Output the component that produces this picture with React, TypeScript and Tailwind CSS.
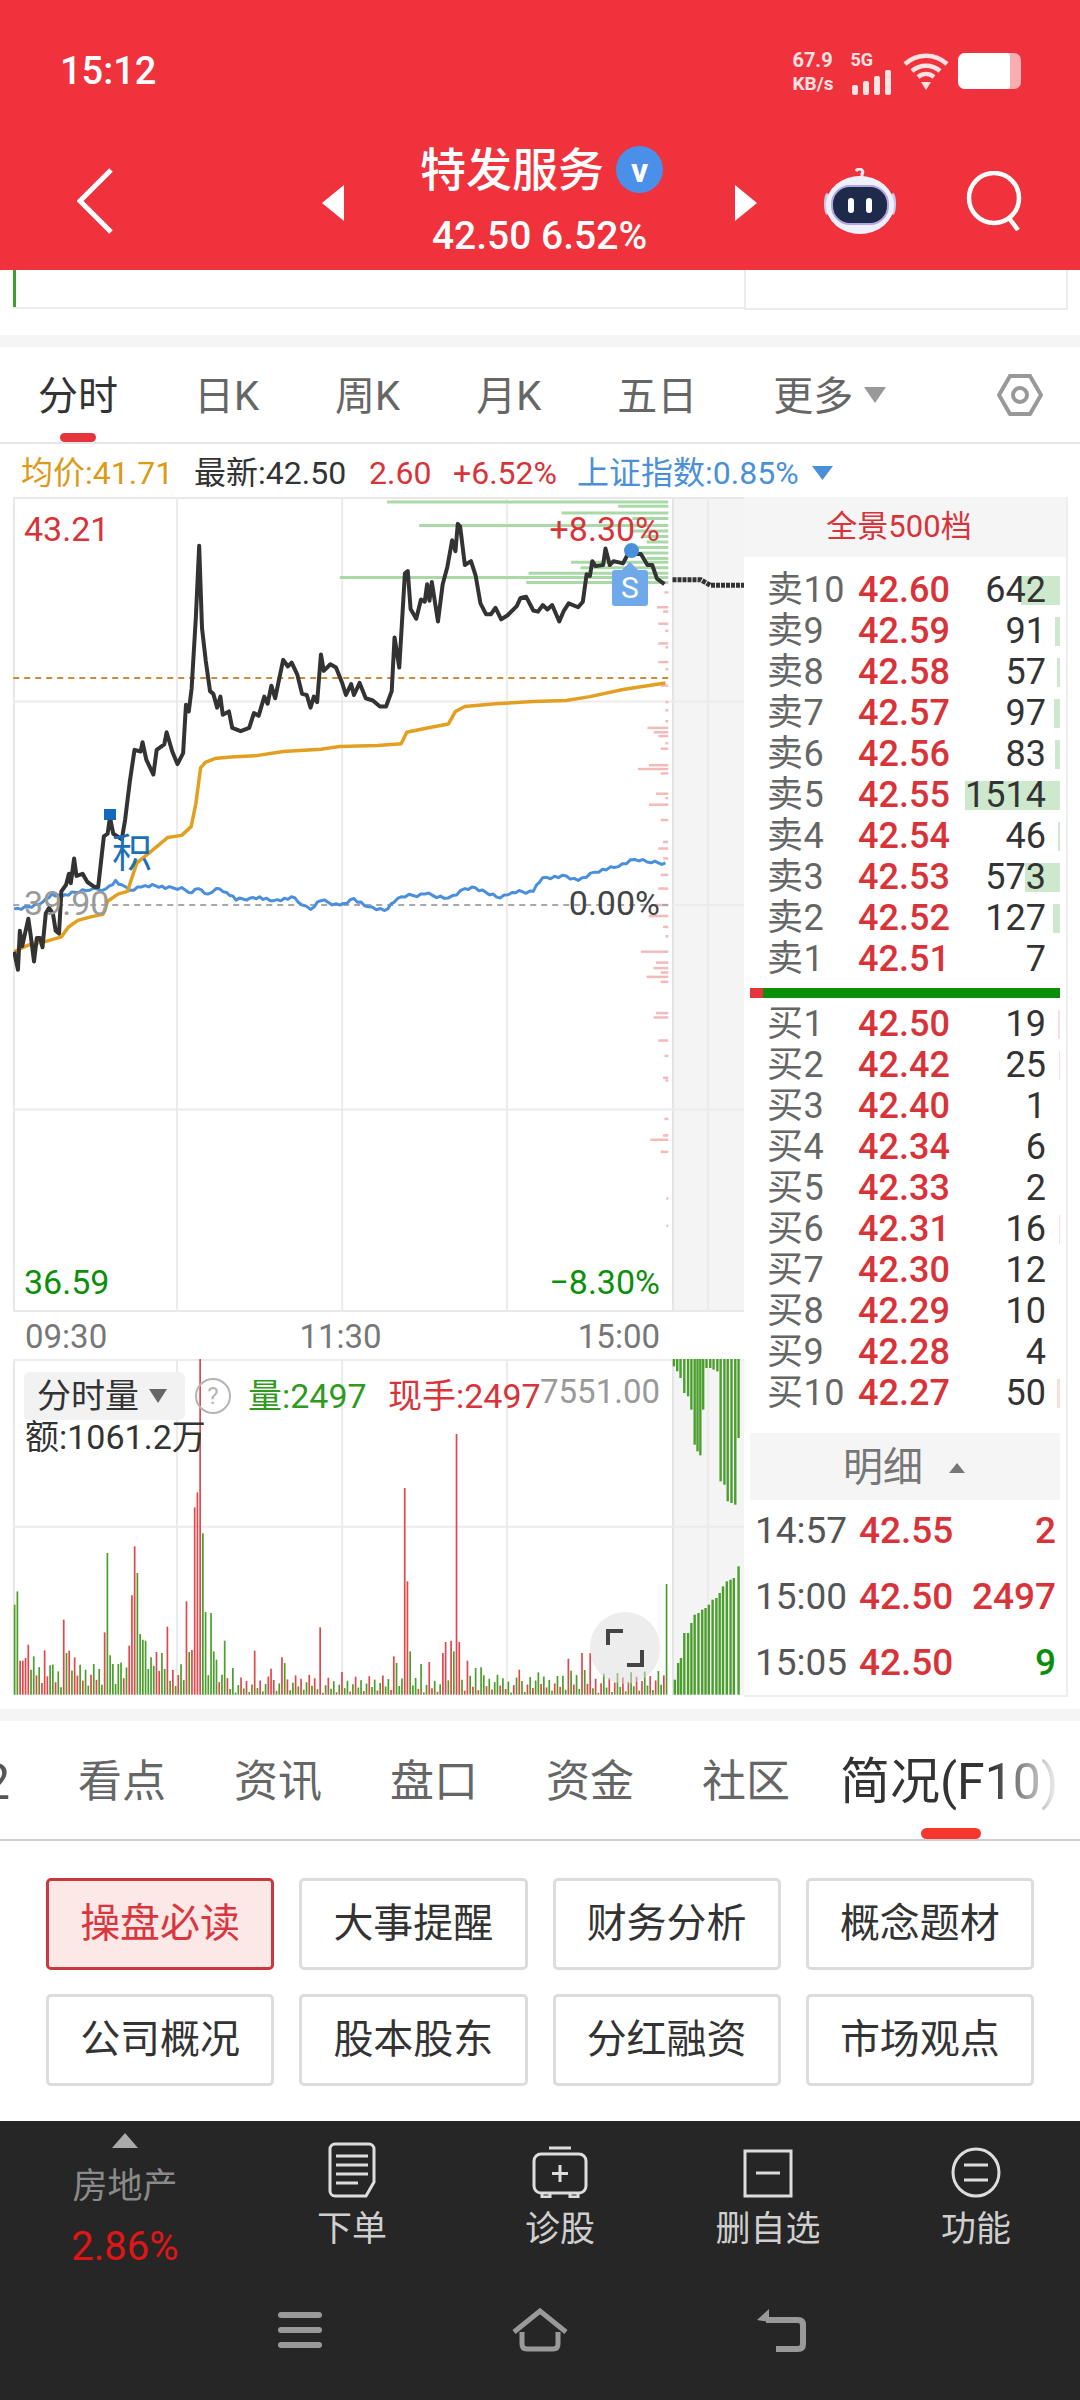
import React from "react"

const fontStack = "font-['Roboto','Noto_Sans_CJK_SC',sans-serif]"

const priceLine = "30,860 38,893 42,822 47,850 60,800 65,830 72,878 78,835 85,835 90,852 97,790 104,780 112,790 118,822 125,827 130,750 140,738 146,718 150,735 157,690 162,722 175,718 185,733 200,742 208,742 220,650 228,645 233,615 240,645 258,655 265,620 275,550 285,492 298,495 302,478 310,510 325,537 332,492 348,482 353,460 365,495 376,518 388,498 394,410 400,422 406,380 415,250 422,120 428,270 436,330 445,385 452,390 460,415 467,395 472,428 485,422 492,452 510,458 528,452 538,425 548,430 560,395 567,408 575,375 583,398 600,328 610,340 618,333 630,355 640,390 650,392 658,415 665,395 672,405 680,318 686,348 700,336 712,342 725,370 733,392 744,372 750,392 762,370 775,398 790,402 805,413 818,413 830,385 836,287 846,342 858,170 864,166 870,235 882,253 892,218 900,222 905,190 910,220 915,186 928,258 938,190 948,158 958,110 965,130 970,80 975,85 985,155 998,148 1008,175 1018,225 1030,245 1040,245 1050,233 1062,254 1075,247 1095,230 1103,215 1115,213 1130,238 1140,240 1150,228 1160,236 1170,228 1185,258 1195,238 1205,225 1225,232 1235,222 1243,172 1250,175 1255,148 1262,157 1278,155 1283,125 1292,155 1300,148 1320,152 1335,128 1345,135 1358,135 1372,155 1382,155 1392,180 1408,190"
const avgLine = "30,860 55,850 70,845 90,843 110,838 130,833 145,815 165,803 190,797 218,792 228,768 250,755 270,750 290,698 320,677 355,652 385,648 405,632 415,590 425,525 435,515 455,508 490,505 540,503 600,495 680,491 720,486 800,484 850,481 862,460 900,453 950,445 965,422 985,413 1050,408 1130,404 1200,402 1250,395 1320,382 1410,370"
const indexAnchors = [[30, 782], [60, 778], [90, 770], [110, 755], [130, 760], [160, 752], [190, 748], [225, 745], [245, 730], [258, 738], [275, 748], [300, 742], [330, 740], [350, 745], [385, 743], [400, 752], [420, 745], [440, 755], [458, 745], [480, 752], [500, 766], [530, 762], [550, 760], [580, 767], [625, 762], [640, 775], [658, 783], [680, 767], [720, 775], [750, 763], [780, 778], [815, 785], [835, 770], [850, 760], [900, 755], [950, 762], [985, 745], [1000, 742], [1030, 752], [1060, 762], [1085, 752], [1130, 750], [1150, 725], [1200, 722], [1225, 730], [1260, 715], [1310, 705], [1345, 692], [1380, 698], [1410, 698]]

// the index ticks every minute, so the anchors get a small fixed ripple between them
const indexLine = indexAnchors
  .flatMap(([x, y], i) => {
    const next = indexAnchors[i + 1]
    if (!next) return [`${x},${y}`]
    const steps = Math.max(1, Math.round((next[0] - x) / 8))
    return Array.from({ length: steps }, (_, s) => {
      const t = s / steps
      const ripple = s === 0 ? 0 : ((i * 31 + s * 17) % 7) - 3
      return `${x + (next[0] - x) * t},${y + (next[1] - y) * t + ripple}`
    })
  })
  .join(" ")

// depth ladder on the right edge of the price chart: [y, left]
const askDepth = [[40, 820], [48, 1310], [60, 1190], [70, 1340], [83, 888], [93, 1340], [103, 1360], [113, 1370], [123, 1350], [133, 1340], [143, 1370], [150, 1210], [160, 1230], [170, 1120], [178, 720], [187, 1115]]
const bidDepth = [[205, 1408], [232, 1392], [240, 1405], [262, 1395], [275, 1410], [298, 1395], [305, 1410], [332, 1395], [345, 1410], [375, 1400], [405, 1410], [420, 1410], [440, 1410], [452, 1372], [460, 1385], [467, 1395], [480, 1410], [490, 1400], [520, 1375], [527, 1352], [535, 1400], [572, 1390], [580, 1410], [592, 1375], [620, 1400], [660, 1405], [672, 1395], [690, 1405], [720, 1400], [745, 1395], [775, 1390], [795, 1375], [815, 1405], [832, 1410], [860, 1358], [880, 1390], [890, 1385], [898, 1400], [906, 1370], [915, 1400], [972, 1390], [980, 1385], [1022, 1395], [1050, 1408], [1090, 1405], [1095, 1410], [1165, 1408], [1195, 1405], [1203, 1378], [1225, 1400], [1310, 1412], [1360, 1412]]

const volumeSpikes: [number, number, string][] = [[32, 800, "g"], [38, 760, "g"], [42, 968, "r"], [48, 968, "r"], [55, 960, "r"], [60, 920, "r"], [66, 995, "g"], [72, 955, "g"], [78, 1012, "r"], [95, 937, "r"], [101, 1015, "r"], [107, 982, "g"], [112, 980, "g"], [135, 845, "r"], [141, 945, "g"], [147, 938, "r"], [158, 958, "r"], [220, 883, "r"], [227, 645, "g"], [233, 952, "g"], [239, 978, "g"], [250, 978, "g"], [273, 923, "r"], [279, 772, "r"], [285, 625, "r"], [290, 705, "g"], [296, 888, "g"], [302, 905, "g"], [308, 908, "g"], [313, 993, "g"], [319, 958, "g"], [331, 942, "r"], [342, 945, "g"], [348, 993, "g"], [353, 866, "r"], [394, 790, "r"], [400, 942, "g"], [405, 936, "r"], [411, 508, "r"], [417, 463, "r"], [422, 62, "r"], [428, 586, "g"], [434, 822, "g"], [445, 825, "g"], [451, 940, "g"], [457, 965, "g"], [475, 908, "g"], [491, 990, "g"], [537, 938, "r"], [577, 992, "r"], [595, 958, "r"], [606, 975, "g"], [681, 868, "r"], [727, 1002, "r"], [836, 955, "r"], [842, 975, "g"], [858, 450, "r"], [864, 730, "r"], [870, 940, "g"], [893, 978, "g"], [910, 972, "r"], [940, 945, "r"], [945, 912, "r"], [956, 908, "r"], [962, 940, "g"], [968, 288, "r"], [974, 912, "r"], [991, 968, "r"], [1008, 990, "g"], [1019, 988, "g"], [1100, 995, "r"], [1140, 1003, "g"], [1204, 962, "r"], [1232, 945, "r"], [1250, 945, "r"], [1410, 738, "g"]]

// one bar per minute; a small fixed sequence fills the quiet minutes between spikes
const volumeBars = Array.from({ length: 240 }, (_, i) => {
  const x = 31 + i * 5.78
  const noise = ((i * 7919 + 13) % 101) / 101
  const height = i < 70 ? 20 + noise * 80 : 6 + noise * (i > 200 ? 70 : 55)
  const spike = volumeSpikes.find(([sx]) => Math.abs(sx - x) <= 2.9)
  return {
    x,
    top: spike ? spike[1] : 1070 - height,
    color: (spike ? spike[2] : (i * 37) % 5 < 2 ? "r" : "g") === "r" ? "#e2474b" : "#4a9f2c",
  }
})

const closeHanging = [[1428, 85], [1435, 100], [1442, 120], [1450, 165], [1458, 175], [1465, 215], [1472, 320], [1478, 340], [1484, 352], [1490, 215], [1497, 90], [1505, 90], [1512, 95], [1520, 100], [1527, 430], [1535, 440], [1542, 490], [1550, 495], [1558, 500], [1565, 300]]
const closeRising = [[1430, 1025], [1437, 975], [1443, 960], [1450, 885], [1458, 885], [1465, 855], [1472, 830], [1480, 825], [1488, 815], [1495, 810], [1502, 800], [1510, 785], [1518, 780], [1525, 765], [1532, 745], [1540, 730], [1548, 725], [1555, 720], [1565, 685]]

const asks = [
  ["卖10", "42.60", "642", 39],
  ["卖9", "42.59", "91", 5],
  ["卖8", "42.58", "57", 3],
  ["卖7", "42.57", "97", 6],
  ["卖6", "42.56", "83", 5],
  ["卖5", "42.55", "1514", 95],
  ["卖4", "42.54", "46", 2],
  ["卖3", "42.53", "573", 35],
  ["卖2", "42.52", "127", 7],
  ["卖1", "42.51", "7", 0],
] as const

const bids = [
  ["买1", "42.50", "19", 2],
  ["买2", "42.42", "25", 1],
  ["买3", "42.40", "1", 0],
  ["买4", "42.34", "6", 0],
  ["买5", "42.33", "2", 0],
  ["买6", "42.31", "16", 1],
  ["买7", "42.30", "12", 0],
  ["买8", "42.29", "10", 0],
  ["买9", "42.28", "4", 0],
  ["买10", "42.27", "50", 3],
] as const

const ticks = [
  ["14:57", "42.55", "2", "text-[#d9333a]"],
  ["15:00", "42.50", "2497", "text-[#d9333a]"],
  ["15:05", "42.50", "9", "text-[#0b8f0b]"],
]

const buttons = ["操盘必读", "大事提醒", "财务分析", "概念题材", "公司概况", "股本股东", "分红融资", "市场观点"]

function StatusBar() {
  return (
    <div className="flex h-[145px] items-start pl-[60px]">
      <span className="mt-[51px] text-[38px] leading-[40px] font-medium text-white">15:12</span>
      <div className="ml-[636px] mt-[49px] flex w-[44px] flex-col text-[20px] leading-[23px] font-bold text-[#ffe3e3]">
        <span>67.9</span>
        <span className="text-[19px]">KB/s</span>
      </div>
      <div className="ml-[14px] mt-[50px] flex w-[44px] flex-col">
        <span className="text-[18px] leading-[20px] font-bold text-[#ffe3e3]">5G</span>
        <svg width="44" height="25" viewBox="0 0 44 25" fill="#ffe3e3">
          <rect x="2" y="15" width="6" height="10" rx="2" />
          <rect x="13" y="11" width="6" height="14" rx="2" />
          <rect x="24" y="6" width="6" height="19" rx="2" />
          <rect x="35" y="0" width="6" height="25" rx="2" />
        </svg>
      </div>
      <svg className="ml-[9px] mt-[53px]" width="46" height="38" viewBox="0 0 46 38" fill="none" stroke="#ffe3e3" strokeWidth="4.5">
        <path d="M2 11C14 0 32 0 44 11" />
        <path d="M9 18C17 11 29 11 37 18" />
        <path d="M15 24C20 20 26 20 31 24" />
        <path d="M18 29H28L23 37Z" fill="#ffe3e3" stroke="none" />
      </svg>
      <div className="ml-[9px] mt-[53px] flex h-[36px] w-[63px] overflow-hidden rounded-[7px] bg-[#f8aeb0]">
        <div className="h-full w-[52px] rounded-r-[3px] bg-white" />
      </div>
    </div>
  )
}

function RobotIcon() {
  return (
    <svg width="72" height="66" viewBox="0 0 72 66">
      <path d="M32 3C35 -1 41 2 38 6L38 11" fill="none" stroke="#e9ecf8" strokeWidth="3" />
      <ellipse cx="3" cy="36" rx="3" ry="11" fill="#c7cdf0" />
      <ellipse cx="69" cy="36" rx="3" ry="11" fill="#c7cdf0" />
      <ellipse cx="36" cy="37" rx="34" ry="29" fill="#eef0fb" />
      <rect x="8" y="18" width="56" height="38" rx="18" fill="#1d2a4a" stroke="#b3a6e6" strokeWidth="2" />
      <rect x="24" y="30" width="6" height="15" rx="3" fill="#fff" />
      <rect x="42" y="30" width="6" height="15" rx="3" fill="#fff" />
    </svg>
  )
}

function Header() {
  return (
    <header className="flex h-[270px] flex-col bg-[#f0323c] text-white">
      <StatusBar />
      <div className="flex items-center pl-[77px]">
        <svg width="36" height="66" viewBox="0 0 36 66" fill="none" stroke="#fff" strokeWidth="5">
          <path d="M34 2L3 33L34 64" />
        </svg>
        <svg className="ml-[209px] mt-[4px]" width="22" height="36" viewBox="0 0 22 36" fill="#fff">
          <path d="M22 0V36L0 18Z" />
        </svg>
        <div className="flex w-[391px] flex-col items-center">
          <div className="flex h-[48px] items-center gap-[12px] pl-[4px] pt-[1px]">
            <span className="text-[46px] leading-none font-medium">特发服务</span>
            <span className="flex h-[47px] w-[47px] items-center justify-center rounded-full bg-[#4a90e8] text-[34px] leading-none font-bold">v</span>
          </div>
          <span className="mt-[22px] text-[39px] leading-[42px] font-medium">42.50 6.52%</span>
        </div>
        <svg className="mt-[4px]" width="22" height="36" viewBox="0 0 22 36" fill="#fff">
          <path d="M0 0V36L22 18Z" />
        </svg>
        <div className="ml-[67px]">
          <RobotIcon />
        </div>
        <svg className="ml-[70px]" width="60" height="60" viewBox="0 0 60 60" fill="none" stroke="#fff" strokeWidth="4.5">
          <circle cx="28" cy="27" r="25" />
          <path d="M43 47L52 59" />
        </svg>
      </div>
    </header>
  )
}

function ChartTabs() {
  return (
    <div className="relative flex h-[97px] items-center gap-[76px] border-b-2 border-[#e6e6e6] pl-[38px] pt-[5px] text-[40px] leading-none text-[#666]">
      <span className="text-[#333]">分时</span>
      <span>日K</span>
      <span>周K</span>
      <span>月K</span>
      <span>五日</span>
      <span className="flex items-center gap-[11px]">
        更多
        <svg className="mb-[4px]" width="22" height="16" viewBox="0 0 22 16" fill="#999">
          <path d="M0 0H22L11 16Z" />
        </svg>
      </span>
      <svg className="absolute left-[997px] top-[26px]" width="46" height="44" viewBox="0 0 46 44" fill="none" stroke="#999" strokeWidth="4">
        <path d="M13 3H33L44 22L33 41H13L2 22Z" />
        <circle cx="23" cy="22" r="7" />
      </svg>
      <div className="absolute bottom-0 left-[60px] h-[9px] w-[36px] rounded-full bg-[#e5343c]" />
    </div>
  )
}

function Legend() {
  return (
    <div className="flex h-[53px] items-center pl-[21px] pt-[5px] text-[32px] leading-none font-normal">
      <span className="w-[173px] text-[#dc9a16]">均价:41.71</span>
      <span className="w-[175px] text-[#333]">最新:42.50</span>
      <span className="w-[84px] text-[#d9333a]">2.60</span>
      <span className="w-[124px] text-[#d9333a]">+6.52%</span>
      <span className="text-[#4a90d9]">上证指数:0.85%</span>
      <svg className="ml-[13px]" width="21" height="14" viewBox="0 0 21 14" fill="#4a90d9">
        <path d="M0 0H21L10.5 14Z" />
      </svg>
    </div>
  )
}

function PriceChart() {
  return (
    <div className="relative flex h-[815px] w-[731px] border-t-2 border-b-2 border-[#e8e8e8]">
      <div className="h-full w-[659px] border-l-2 border-[#e8e8e8]" />
      <div className="h-full w-[72px] border-l-2 border-[#e4e4e4] bg-[#f4f4f4]" />
      <svg className="absolute left-0 top-[-2px]" width="731" height="815" viewBox="27.5 31 1549 1486" preserveAspectRatio="none" fill="none">
        <g stroke="#ebebeb" strokeWidth="2">
          {[375, 725, 1074, 1500].map((x) => (
            <line key={x} x1={x} x2={x} y1="31" y2="1517" vectorEffect="non-scaling-stroke" />
          ))}
          {[404, 1148].map((y) => (
            <line key={y} x1="28" x2="1577" y1={y} y2={y} vectorEffect="non-scaling-stroke" />
          ))}
        </g>
        <line x1="1425" x2="1577" y1="775" y2="775" stroke="#ebebeb" strokeWidth="2" vectorEffect="non-scaling-stroke" />
        {askDepth.map(([y, left]) => (
          <line key={y} x1={left} x2="1416" y1={y} y2={y} stroke="#a9d9a7" strokeWidth="3" vectorEffect="non-scaling-stroke" />
        ))}
        {bidDepth.map(([y, left]) => (
          <line key={y} x1={left} x2="1416" y1={y} y2={y} stroke="#f4b9b9" strokeWidth="2.5" vectorEffect="non-scaling-stroke" />
        ))}
        <line x1="28" x2="1425" y1="361" y2="361" stroke="#d08a3c" strokeWidth="2" strokeDasharray="6 5" vectorEffect="non-scaling-stroke" />
        <line x1="28" x2="1416" y1="775" y2="775" stroke="#a8a8a8" strokeWidth="2" strokeDasharray="6 5" vectorEffect="non-scaling-stroke" />
        <polyline points={indexLine} stroke="#4a8fdc" strokeWidth="3" strokeLinejoin="round" vectorEffect="non-scaling-stroke" />
        <polyline points={avgLine} stroke="#e3a020" strokeWidth="3.5" strokeLinejoin="round" vectorEffect="non-scaling-stroke" />
        <polyline points={priceLine} stroke="#333" strokeWidth="4" strokeLinejoin="round" vectorEffect="non-scaling-stroke" />
        <polyline points="1425,182 1485,182 1505,192 1577,192" stroke="#333" strokeWidth="5" strokeDasharray="4 1" vectorEffect="non-scaling-stroke" />
      </svg>
      <span className="absolute left-[11px] top-[14px] text-[34px] leading-[32px] text-[#d9333a]">43.21</span>
      <span className="absolute right-[84px] top-[14px] text-[34px] leading-[32px] text-[#d9333a]">+8.30%</span>
      <span className="absolute left-[11px] top-[388px] text-[34px] leading-[32px] text-[#9a9a9a]">39.90</span>
      <span className="absolute right-[84px] top-[388px] text-[34px] leading-[32px] text-[#444]">0.00%</span>
      <span className="absolute left-[11px] bottom-[12px] text-[34px] leading-[32px] text-[#0b8f0b]">36.59</span>
      <span className="absolute right-[84px] bottom-[12px] text-[34px] leading-[32px] text-[#0b8f0b]">−8.30%</span>
      <div className="absolute left-[91px] top-[310px] h-[11px] w-[12px] bg-[#1569bd]" />
      <span className="absolute left-[99px] top-[335px] text-[40px] leading-[40px] text-[#1b6fb8]">积</span>
      <div className="absolute left-[611px] top-[44px] h-[15px] w-[15px] rounded-full bg-[#4a8fdc]" />
      <div className="absolute left-[610px] top-[66px] h-[14px] w-[14px] rotate-45 bg-[#6fa9ea]" />
      <div className="absolute left-[599px] top-[71px] flex h-[36px] w-[36px] items-center justify-center rounded-[3px] bg-[#6fa9ea] text-[30px] leading-none text-white">S</div>
    </div>
  )
}

function TimeAxis() {
  return (
    <div className="relative flex h-[47px] w-[659px] items-center justify-between pl-[12px] pr-[12px] pt-[3px] text-[33px] leading-none text-[#777]">
      <span>09:30</span>
      <span className="ml-[-4px]">11:30</span>
      <span>15:00</span>
    </div>
  )
}

function VolumeChart() {
  return (
    <div className="relative flex h-[336px] w-[731px] border-t-2 border-[#ececec]">
      <div className="h-full w-[659px] border-l-2 border-[#e8e8e8]" />
      <div className="h-full w-[72px] border-l-2 border-[#e4e4e4] bg-[#f4f4f4]" />
      <svg className="absolute left-0 top-[-2px]" width="731" height="336" viewBox="27.5 63 1549 1008" preserveAspectRatio="none" fill="none">
        {[375, 725, 1074, 1500].map((x) => (
          <line key={x} x1={x} x2={x} y1="63" y2="1070" stroke="#ebebeb" strokeWidth="2" vectorEffect="non-scaling-stroke" />
        ))}
        <line x1="28" x2="1577" y1="566" y2="566" stroke="#ebebeb" strokeWidth="2" vectorEffect="non-scaling-stroke" />
        {volumeBars.map((bar) => (
          <line key={bar.x} x1={bar.x} x2={bar.x} y1={bar.top} y2="1070" stroke={bar.color} strokeWidth="1.7" vectorEffect="non-scaling-stroke" />
        ))}
        {closeHanging.map(([x, y]) => (
          <line key={x} x1={x} x2={x} y1="63" y2={y} stroke="#4a9f2c" strokeWidth="2.4" vectorEffect="non-scaling-stroke" />
        ))}
        {closeRising.map(([x, y]) => (
          <line key={x} x1={x} x2={x} y1={y} y2="1070" stroke="#4a9f2c" strokeWidth="2.4" vectorEffect="non-scaling-stroke" />
        ))}
      </svg>
      <div className="absolute left-[11px] top-[11px] flex h-[48px] w-[161px] items-center gap-[10px] rounded-[6px] bg-[#f2f2f2] pl-[13px] text-[34px] leading-none text-[#333]">
        分时量
        <svg width="18" height="14" viewBox="0 0 18 14" fill="#666">
          <path d="M0 0H18L9 14Z" />
        </svg>
      </div>
      <div className="absolute left-[182px] top-[17px] flex h-[36px] w-[36px] items-center justify-center rounded-full border-2 border-[#b5b5b5] text-[24px] leading-none text-[#b5b5b5]">?</div>
      <span className="absolute left-[235px] top-[17px] text-[34px] leading-[36px] text-[#2f9a1e]">量:2497</span>
      <span className="absolute left-[375px] top-[17px] text-[34px] leading-[36px] text-[#d9333a]">现手:2497</span>
      <span className="absolute left-[527px] top-[13px] text-[33px] leading-[36px] text-[#999]">7551.00</span>
      <span className="absolute left-[12px] top-[58px] text-[34px] leading-[36px] text-[#333]">额:1061.2万</span>
      <div className="absolute left-[577px] top-[251px] flex h-[72px] w-[70px] items-center justify-center rounded-full bg-[#dcdcdc]/50">
        <svg width="38" height="38" viewBox="0 0 38 38" fill="none" stroke="#444" strokeWidth="4">
          <path d="M2 16V2H17" />
          <path d="M36 21V36H21" />
        </svg>
      </div>
    </div>
  )
}

function BookRow({ label, price, qty, bar, barColor }: { label: string; price: string; qty: string; bar: number; barColor: string }) {
  return (
    <div className="relative flex h-[41px] items-center pl-[17px] pr-[14px]">
      {bar > 0 && <div className={`absolute right-0 top-[6px] h-[29px] ${barColor}`} style={{ width: bar }} />}
      <span className="relative w-[91px] text-[36px] leading-none tracking-[0.5px] text-[#666]">{label}</span>
      <span className="relative text-[36px] leading-none font-medium text-[#d9333a]">{price}</span>
      <span className="relative flex-1 text-right text-[36px] leading-none text-[#333]">{qty}</span>
    </div>
  )
}

function OrderBook() {
  return (
    <aside className="flex h-[1200px] w-[324px] flex-col border-r-2 border-b-2 border-[#eee]">
      <div className="flex h-[60px] shrink-0 items-center justify-center bg-[#f5f5f5] pr-[12px] text-[31px] leading-none text-[#d9333a]">全景500档</div>
      <div className="mt-[13px] flex flex-col px-[6px]">
        {asks.map(([label, price, qty, bar]) => (
          <BookRow key={label} label={label} price={price} qty={qty} bar={bar} barColor="bg-[#cde8cd]" />
        ))}
        <div className="mt-[8px] mb-[6px] flex h-[10px]">
          <div className="w-[13px] bg-[#e5343c]" />
          <div className="flex-1 bg-[#0b8f0b]" />
        </div>
        {bids.map(([label, price, qty, bar]) => (
          <BookRow key={label} label={label} price={price} qty={qty} bar={bar} barColor="bg-[#f8dede]" />
        ))}
        <div className="mt-[19px] flex h-[67px] items-center gap-[26px] bg-[#f5f5f5] pl-[93px] pt-[3px] text-[40px] leading-none text-[#777]">
          明细
          <svg width="16" height="10" viewBox="0 0 16 10" fill="#777">
            <path d="M0 10H16L8 0Z" />
          </svg>
        </div>
        <div className="mt-[-2px] flex flex-col">
          {ticks.map(([time, price, qty, color]) => (
            <div key={time} className="flex h-[66px] items-center pl-[5px] pr-[4px] text-[37px] leading-none">
              <span className="w-[104px] text-[#555]">{time}</span>
              <span className="font-medium text-[#d9333a]">{price}</span>
              <span className={`flex-1 text-right font-medium ${color}`}>{qty}</span>
            </div>
          ))}
        </div>
      </div>
    </aside>
  )
}

function InfoTabs() {
  return (
    <div className="relative flex h-[121px] items-center overflow-hidden border-b-2 border-[#cfcfcf] pt-[4px] text-[44px] leading-none text-[#666]">
      <span className="ml-[-18px] w-[96px] text-[50px] text-[#555]">2</span>
      <span className="w-[156px]">看点</span>
      <span className="w-[156px]">资讯</span>
      <span className="w-[156px]">盘口</span>
      <span className="w-[156px]">资金</span>
      <span className="w-[140px]">社区</span>
      <span className="ml-[-2px] text-[50px] whitespace-nowrap text-[#333]">简况(F10)</span>
      <div className="absolute right-[18px] top-0 h-full w-[70px] bg-gradient-to-r from-white/0 to-white" />
      <div className="absolute bottom-0 left-[921px] h-[11px] w-[60px] rounded-full bg-[#f5372f]" />
    </div>
  )
}

function InfoButtons() {
  return (
    <div className="grid grid-cols-4 gap-x-[25px] gap-y-[24px] px-[46px] pt-[37px]">
      {buttons.map((name, i) => (
        <div
          key={name}
          className={`flex h-[92px] items-center justify-center rounded-[5px] border-[3px] text-[40px] leading-none ${
            i === 0 ? "border-[#c8383c] bg-[#fde8e8] text-[#d9363e]" : "border-[#dcdcdc] bg-white text-[#333]"
          }`}
        >
          {name}
        </div>
      ))}
    </div>
  )
}

function FooterAction({ label, children }: { label: string; children: React.ReactNode }) {
  return (
    <div className="mt-[4px] flex w-[208px] flex-col items-center">
      <div className="flex h-[61px] items-end">{children}</div>
      <span className="mt-[13px] text-[35px] leading-[38px] text-[#cfcfcf]">{label}</span>
    </div>
  )
}

function Footer() {
  return (
    <footer className="flex h-[279px] flex-col bg-[#262626]">
      <div className="flex items-start pl-[2px] pt-[12px]">
        <div className="flex w-[246px] flex-col items-center">
          <svg width="26" height="15" viewBox="0 0 26 15" fill="#aaa">
            <path d="M13 0L26 15H0Z" />
          </svg>
          <span className="mt-[20px] text-[35px] leading-[38px] text-[#8a8a8a]">房地产</span>
          <span className="mt-[22px] text-[40px] leading-[38px] text-[#e01515]">2.86%</span>
        </div>
        <FooterAction label="下单">
          <svg width="48" height="56" viewBox="0 0 48 56" fill="none" stroke="#ddd" strokeWidth="3">
            <path d="M7 2H41A5 5 0 0 1 46 7V40L38 54H7A5 5 0 0 1 2 49V7A5 5 0 0 1 7 2Z" />
            <path d="M8 14H40M8 23H40M8 32H40M8 41H30" />
          </svg>
        </FooterAction>
        <FooterAction label="诊股">
          <svg width="56" height="52" viewBox="0 0 56 52" fill="none" stroke="#ddd" strokeWidth="3">
            <path d="M17 2H39" />
            <rect x="2" y="8" width="52" height="39" rx="7" />
            <path d="M28 19V36M20 27.5H36" />
            <path d="M10 47V51H18V47M38 47V51H46V47" />
          </svg>
        </FooterAction>
        <FooterAction label="删自选">
          <svg width="50" height="49" viewBox="0 0 50 49" fill="none" stroke="#ddd" strokeWidth="3">
            <rect x="2" y="2" width="46" height="45" />
            <path d="M13 24H37" />
          </svg>
        </FooterAction>
        <FooterAction label="功能">
          <svg width="50" height="51" viewBox="0 0 50 51" fill="none" stroke="#ddd" strokeWidth="3">
            <ellipse cx="25" cy="25.5" rx="23" ry="23.5" />
            <path d="M13 18H37M13 33H37" />
          </svg>
        </FooterAction>
      </div>
      <div className="mt-[42px] flex items-center pl-[278px]">
        <div className="flex h-[36px] w-[44px] flex-col justify-between">
          <div className="h-[6px] rounded-[3px] bg-[#999]" />
          <div className="h-[6px] rounded-[3px] bg-[#999]" />
          <div className="h-[6px] rounded-[3px] bg-[#999]" />
        </div>
        <svg className="ml-[189px]" width="58" height="44" viewBox="0 0 58 44" fill="none" stroke="#999" strokeWidth="5">
          <path d="M3 24L29 3L55 24" />
          <path d="M11 24V36Q11 41 16 41H42Q47 41 47 36V24" />
        </svg>
        <svg className="ml-[187px]" width="50" height="44" viewBox="0 0 50 44" fill="none" stroke="#999" strokeWidth="6">
          <path d="M10 12H42Q47 12 47 17V36Q47 41 42 41H20" />
          <path d="M1 12L13 1V14Z" fill="#999" stroke="none" />
        </svg>
      </div>
    </footer>
  )
}

export default function App() {
  return (
    <div className={`flex h-[2400px] w-[1080px] flex-col overflow-hidden bg-white ${fontStack}`}>
      <Header />
      <div className="flex h-[65px] items-start pl-[13px] pr-[12px]">
        <div className="flex h-[39px] w-[731px] border-b-2 border-[#ececec]">
          <div className="h-full w-[3px] bg-[#3f9f2b]" />
        </div>
        <div className="h-[40px] flex-1 border-x-2 border-b-2 border-[#ececec]" />
      </div>
      <div className="h-[12px] bg-[#f5f5f5]" />
      <ChartTabs />
      <Legend />
      <div className="flex h-[1200px] pl-[13px]">
        <div className="flex w-[731px] flex-col">
          <PriceChart />
          <TimeAxis />
          <VolumeChart />
        </div>
        <OrderBook />
      </div>
      <div className="mt-[12px] h-[12px] bg-[#f5f5f5]" />
      <InfoTabs />
      <div className="h-[280px] bg-white">
        <InfoButtons />
      </div>
      <Footer />
    </div>
  )
}
